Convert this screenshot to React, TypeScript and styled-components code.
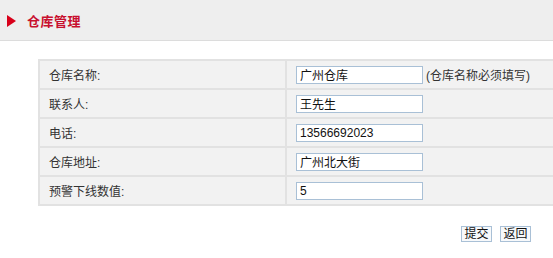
import styled, { createGlobalStyle } from "styled-components"

const GlobalStyle = createGlobalStyle`
  html, body {
    margin: 0;
    padding: 0;
    background: #ffffff;
    overflow: hidden;
  }
  body {
    font-family: "Liberation Sans", "Noto Sans CJK SC", sans-serif;
    font-size: 12px;
    color: #333;
  }
`;

const Header = styled.div`
  display: flex;
  align-items: center;
  height: 40px;
  background: #eeeeee;
  border-bottom: 1px solid #dcdcdc;
  padding-left: 7px;
  gap: 11px;
`;

const Arrow = styled.span`
  width: 0;
  height: 0;
  border-top: 6px solid transparent;
  border-bottom: 6px solid transparent;
  border-left: 9px solid #d8001a;
  margin-top: 1px;
`;

const Title = styled.h1`
  margin: 0;
  font-size: 13px;
  font-weight: 700;
  color: #c8102e;
  letter-spacing: 0.5px;
`;

const FormTable = styled.table`
  margin: 18px 0 0 38px;
  width: 520px;
  border-collapse: collapse;
  background: #f2f2f2;

  td {
    height: 27px;
    border: 2px solid #e2e2e2;
    padding: 0 0 0 9px;
    vertical-align: middle;
  }
  td:first-child {
    width: 236px;
  }
`;

const Field = styled.input`
  box-sizing: border-box;
  width: 127px;
  height: 18px;
  border: 1px solid #a9c0d6;
  padding: 0 3px;
  font-family: "Liberation Sans", "Noto Sans CJK SC", sans-serif;
  font-size: 12px;
  color: #111;
  background: #fff;
  vertical-align: middle;
  outline: none;
`;

const Hint = styled.span`
  margin-left: 3px;
  vertical-align: middle;
`;

const Actions = styled.div`
  display: flex;
  justify-content: flex-end;
  gap: 8px;
  padding: 20px 22px 0 0;
`;

const Button = styled.button`
  box-sizing: border-box;
  width: 31px;
  height: 16px;
  padding: 0;
  border: 1px solid #a9c0d6;
  background: #f7f9fb;
  font-family: "Liberation Sans", "Noto Sans CJK SC", sans-serif;
  font-size: 12px;
  line-height: 14px;
  color: #111;
`;

type Row = { label: string; value: string; hint?: string };

const rows: Row[] = [
  { label: "仓库名称:", value: "广州仓库", hint: "(仓库名称必须填写)" },
  { label: "联系人:", value: "王先生" },
  { label: "电话:", value: "13566692023" },
  { label: "仓库地址:", value: "广州北大街" },
  { label: "预警下线数值:", value: "5" },
];

export default function App() {
  return (
    <>
      <GlobalStyle />
      <Header>
        <Arrow />
        <Title>仓库管理</Title>
      </Header>
      <FormTable>
        <tbody>
          {rows.map((r, i) => (
            <tr key={i}>
              <td>{r.label}</td>
              <td>
                <Field defaultValue={r.value} />
                {r.hint && <Hint>{r.hint}</Hint>}
              </td>
            </tr>
          ))}
        </tbody>
      </FormTable>
      <Actions>
        <Button>提交</Button>
        <Button>返回</Button>
      </Actions>
    </>
  )
}
